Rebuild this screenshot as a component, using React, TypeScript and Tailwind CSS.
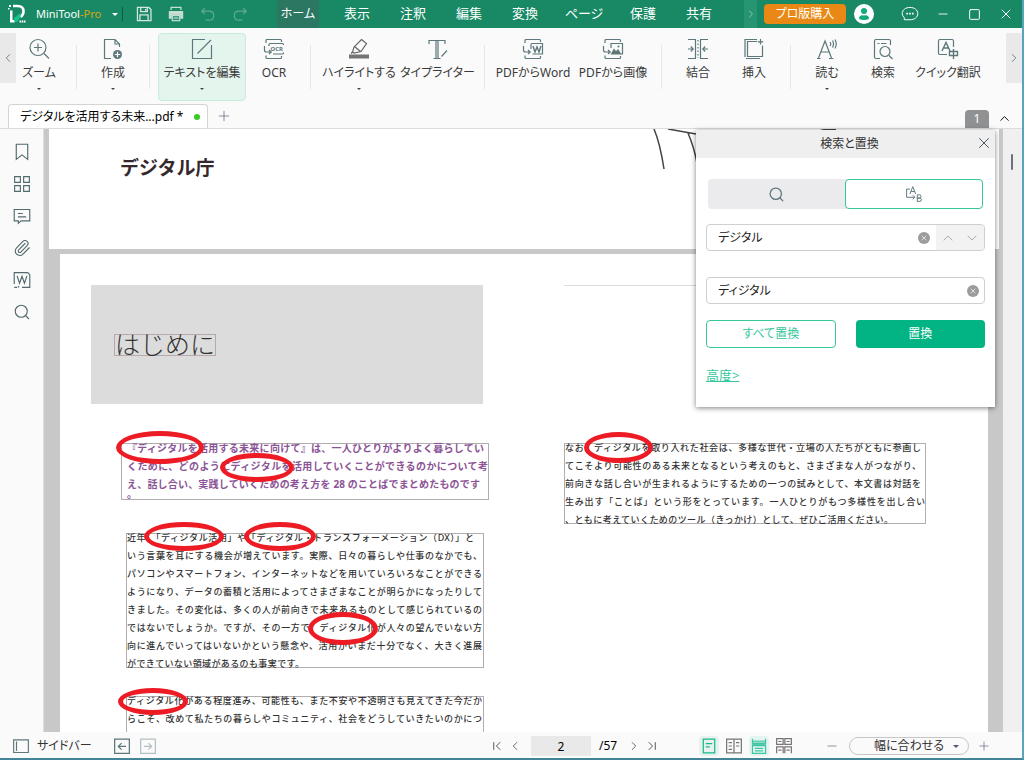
import type { ReactNode } from "react";
import { ChevronDown, ChevronLeft, ChevronRight, ChevronUp, Minus, Paperclip, Plus, Search, Square, X } from "lucide-react";
import clsx from "clsx";

type Tool = {
  label: string;
  icon: ReactNode;
  width: string;
  menu?: boolean;
  active?: boolean;
  divider?: boolean;
};

type Line = {
  text: string;
  className?: string;
};

const menuTabs = [
  { label: "表示", width: "w-14" },
  { label: "注釈", width: "w-14" },
  { label: "編集", width: "w-14" },
  { label: "変換", width: "w-14" },
  { label: "ページ", width: "w-[62px]" },
  { label: "保護", width: "w-14" },
  { label: "共有", width: "w-14" }
];

function Icon({ children, className = "h-[22px] w-[22px]" }: { children: ReactNode; className?: string }) {
  return (
    <svg viewBox="0 0 22 22" fill="none" stroke="currentColor" strokeWidth="1.2" className={clsx("shrink-0", className)} aria-hidden="true">
      {children}
    </svg>
  );
}

const convertFrame = <path d="M3 5V2.5Q3 1.5 4 1.5H17.5Q18.5 1.5 18.5 2.5V4M1.5 8V12Q1.5 14 3.5 14H8M6 12l2.2 2L6 16M3 17.5V19.5Q3 20.5 4 20.5H17.5Q18.5 20.5 18.5 19.5V18" />;

const tools: Tool[] = [
  {
    label: "ズーム",
    width: "w-[46px] mr-1.5",
    menu: true,
    divider: true,
    icon: (
      <Icon>
        <circle cx="10" cy="9.5" r="8" />
        <path d="M10 5.5v8M6 9.5h8M16 15.5l5 5" />
      </Icon>
    )
  },
  {
    label: "作成",
    width: "w-14",
    menu: true,
    divider: true,
    icon: (
      <Icon>
        <path d="M9 20.5H2.5V1.5H13L17.5 6V9M13 1.5V6H17.5" />
        <circle cx="15.5" cy="16.5" r="4.5" fill="currentColor" stroke="none" />
        <path d="M15.5 13.8v5.4M12.8 16.5h5.4" stroke="white" />
      </Icon>
    )
  },
  {
    label: "テキストを編集",
    width: "w-[88px]",
    menu: true,
    active: true,
    icon: (
      <Icon>
        <path d="M14 1.5H1.5V20.5H20.5V7M6.5 15.5L20 2" />
      </Icon>
    )
  },
  {
    label: "OCR",
    width: "w-14",
    divider: true,
    icon: (
      <Icon>
        {convertFrame}
        <path d="M6 8V6.5Q6 5.5 7 5.5H19.5Q20.5 5.5 20.5 6.5V7M10 16H19.5Q20.5 16 20.5 15V14.5" />
        <text x="7.5" y="13" fontSize="6" fontFamily="Noto Sans" fontWeight="700" fill="currentColor" stroke="none">OCR</text>
      </Icon>
    )
  },
  {
    label: "ハイライトする",
    width: "w-20",
    menu: true,
    icon: (
      <Icon>
        <path d="M13.5 1.5l5 4-5.5 8-7 1.5-1.5-1 1.5-5zM6.5 8.5l6 5M4.5 14l-1.5 1.5" stroke="#666" />
        <path d="M1 18.5h20" strokeWidth="4" stroke="#737373" />
      </Icon>
    )
  },
  {
    label: "タイプライター",
    width: "w-[77px]",
    divider: true,
    icon: (
      <Icon>
        <path d="M2 6V2.5H18V6M9 2.5V20.5M11 2.5V20.5M6.5 20.5H13.5M14.5 18.5L20 12.5" />
      </Icon>
    )
  },
  {
    label: "PDFからWord",
    width: "w-20",
    icon: (
      <Icon>
        {convertFrame}
        <path d="M9 11V6.5Q9 5.5 10 5.5H20.5V16H10.5" />
        <path d="M11 8l2 6 2-5 2 5 2-6" strokeWidth="1.4" />
      </Icon>
    )
  },
  {
    label: "PDFから画像",
    width: "w-20",
    divider: true,
    icon: (
      <Icon>
        {convertFrame}
        <path d="M9 10V5.5H20.5V16H19" />
        <path d="M9.5 16l2.5-4.5 2 2.5 2-2 2.5 4z" fill="currentColor" />
        <circle cx="16.5" cy="8.5" r="1" fill="currentColor" stroke="none" />
      </Icon>
    )
  },
  {
    label: "結合",
    width: "w-14",
    icon: (
      <Icon>
        <path d="M1 1.5H9M1 20.5H9M13 1.5H21M13 20.5H21M8.5 1.5V20.5M13.5 1.5V20.5M1 11H6M3.8 8.5L6.2 11 3.8 13.5M21 11H16M18.2 8.5L15.8 11 18.2 13.5" />
        <path d="M11 2V20" strokeDasharray="1.5 2" />
      </Icon>
    )
  },
  {
    label: "挿入",
    width: "w-14",
    divider: true,
    icon: (
      <Icon>
        <path d="M14 3.5H4.5V18.5H19.5V7.5M3 20.5H17M2 19V1.5H14M17.5 1V6.5M14.8 3.8H20.3" />
      </Icon>
    )
  },
  {
    label: "読む",
    width: "w-14",
    menu: true,
    icon: (
      <Icon>
        <path d="M2.5 20L9 3L15.5 20M4.8 14H13.2M1 20.5H4.5M13 20.5H17.5M14 4Q15.5 6 14 8M16.5 2.5Q18.5 6 16.5 9.5M19 1.5Q21.5 6 19 10.5" />
      </Icon>
    )
  },
  {
    label: "検索",
    width: "w-14",
    icon: (
      <Icon>
        <path d="M8 20.5H4Q2.5 20.5 2.5 19V3Q2.5 1.5 4 1.5H17Q18.5 1.5 18.5 3V7M5.5 5.5H7.5M9 5.5H14.5M17 17.5L20.5 21" />
        <circle cx="13" cy="13.5" r="5" />
      </Icon>
    )
  },
  {
    label: "クイック翻訳",
    width: "w-[74px]",
    icon: (
      <Icon>
        <path d="M10 16.5H3Q1.5 16.5 1.5 15V3Q1.5 1.5 3 1.5H15Q16.5 1.5 16.5 3V9" />
        <path d="M5 13L9 4.5L13 13M6.5 10H11.5M16.5 11V21M12.5 13.5H20.5V17.5H12.5z" strokeWidth="1.4" />
      </Icon>
    )
  }
];

const purpleText: Line[] = [
  { text: "『ディジタルを活用する未来に向けて』は、一人ひとりがよりよく暮らしてい", className: "pr-1" },
  { text: "くために、どのようにディジタルを活用していくことができるのかについて考" },
  { text: "え、話し合い、実践していくための考え方を 28 のことばでまとめたものです", className: "pr-2" },
  { text: "。", className: "-mt-2" }
];

const eraText: Line[] = [
  { text: "近年、「ディジタル活用」や「ディジタル・トランスフォーメーション（DX）」と", className: "pr-2" },
  { text: "いう言葉を耳にする機会が増えています。実際、日々の暮らしや仕事のなかでも、" },
  { text: "パソコンやスマートフォン、インターネットなどを用いていろいろなことができる" },
  { text: "ようになり、データの蓄積と活用によってさまざまなことが明らかになったりして" },
  { text: "きました。その変化は、多くの人が前向きで未来あるものとして感じられているの" },
  { text: "ではないでしょうか。ですが、その一方で、ディジタル化が人々の望んでいない方" },
  { text: "向に進んでいってはいないかという懸念や、活用がいまだ十分でなく、大きく進展" },
  { text: "ができていない領域があるのも事実です。", className: "w-[177px]" }
];

const progressText: Line[] = [
  { text: "ディジタル化がある程度進み、可能性も、また不安や不透明さも見えてきた今だか" },
  { text: "らこそ、改めて私たちの暮らしやコミュニティ、社会をどうしていきたいのかにつ" }
];

const societyText: Line[] = [
  { text: "なお、ディジタルを取り入れた社会は、多様な世代・立場の人たちがともに参画し", className: "pr-1" },
  { text: "てこそより可能性のある未来となるという考えのもと、さまざまな人がつながり、", className: "pr-1" },
  { text: "前向きな話し合いが生まれるようにするための一つの試みとして、本文書は対話を", className: "pr-1" },
  { text: "生み出す「ことば」という形をとっています。一人ひとりがもつ多様性を出し合い" },
  { text: "、ともに考えていくためのツール（きっかけ）として、ぜひご活用ください。", className: "pr-8" }
];

function Caret({ className }: { className?: string }) {
  return <span className={clsx("block h-0 w-0 border-x-transparent", className)} />;
}

function TitleBar() {
  return (
    <header className="flex h-7 shrink-0 items-center bg-[#188964] text-white">
      <svg viewBox="0 0 20 20" className="ml-2 h-5 w-5 shrink-0" aria-hidden="true">
        <path d="M1 1h2v2H1zM0 4h1.5v1.5H0zM2 18V6.5H4.5V16H8L6.500 18.500H2z" fill="white" />
        <path d="M5 2H9.500Q15.500 2 15.500 7.500Q15.500 11 12.500 13" fill="none" stroke="white" strokeWidth="2.600" />
        <path d="M6 16V14L12.500 9V13L9 18H6.500z" fill="#14c38e" />
        <path d="M11.500 17.500H18" stroke="white" strokeWidth="1.800" strokeDasharray="1.600 .6" />
      </svg>
      <span className="ml-2 w-[73px] text-[11px]">
        MiniTool<span className="text-[#d9a514]">-Pro</span>
      </span>
      <button aria-label="アプリメニュー" className="ml-0.5 flex h-5 w-2 items-center justify-center">
        <Caret className="border-x-[3px] border-t-[3px] border-t-white" />
      </button>
      <span className="ml-[3px] h-3.5 w-px bg-[#0d5a40]" />
      <button aria-label="保存" className="ml-3 text-[#d3e7df]">
        <Icon className="h-[18px] w-[18px]">
          <path d="M3 3H17L19.5 5.5V19H3zM7 3V8H15V3M6 19V12H16V19M13 5V7" strokeWidth="1.6" />
        </Icon>
      </button>
      <button aria-label="印刷" className="ml-3.5 text-[#c4ded4]">
        <Icon className="h-[18px] w-[18px]">
          <path d="M5 6V3H17V6" strokeWidth="1.6" />
          <path d="M3 8H19V16H17V12H5V16H3z" fill="currentColor" strokeWidth="1.6" />
          <path d="M6.5 13H15.5V19H6.5zM8 16H14" strokeWidth="1.6" />
        </Icon>
      </button>
      <button aria-label="元に戻す" className="ml-3.5 text-[#5dab92]">
        <Icon className="h-[18px] w-[18px]">
          <path d="M7 4L3.5 7.5L7 11M3.5 7.5H12Q18 7.5 18 13T12 18.5H8" strokeWidth="1.5" />
        </Icon>
      </button>
      <button aria-label="やり直し" className="ml-3.5 text-[#5dab92]">
        <Icon className="h-[18px] w-[18px]">
          <path d="M15 4L18.5 7.5L15 11M18.5 7.5H10Q4 7.5 4 13T10 18.5H14" strokeWidth="1.5" />
        </Icon>
      </button>
      <nav className="ml-7 flex h-full flex-1 items-center text-[13px]">
        <button className="mr-2.5 h-full w-[42px] whitespace-nowrap bg-[#2b7762] text-[12px]">ホーム</button>
        {menuTabs.map((tab) => (
          <button key={tab.label} className={clsx("h-full whitespace-nowrap", tab.width)}>
            {tab.label}
          </button>
        ))}
      </nav>
      <button aria-label="次のタブ" className="flex h-full w-[13px] items-center justify-center bg-[#279571] text-[#8cc8b2]">
        <ChevronRight size={12} />
      </button>
      <button className="ml-[7px] h-5 w-[82px] whitespace-nowrap rounded bg-[#e98814] text-[12px]">プロ版購入</button>
      <button aria-label="アカウント" className="ml-2 flex h-5 w-5 items-center justify-center rounded-full bg-white">
        <svg viewBox="0 0 14 14" className="h-3.5 w-3.5" fill="#13a97c" aria-hidden="true">
          <circle cx="7" cy="4" r="3" />
          <path d="M2 12Q2 7.5 7 8.5Q12 7.5 12 12Q7 14 2 12z" />
        </svg>
      </button>
      <button aria-label="フィードバック" className="ml-[27px]">
        <Icon className="h-[18px] w-[18px]">
          <path d="M4 18V15.5Q1.5 13 1.5 10.5C1.5 6 5.5 3 11 3S20.5 6 20.5 10.5S16.5 18 11 18z" />
          <path d="M6.5 10.5h2M10 10.5h2M13.5 10.5h2" strokeWidth="2" />
        </Icon>
      </button>
      <button aria-label="最小化" className="ml-[17px]"><Minus size={14} strokeWidth={1.5} /></button>
      <button aria-label="最大化" className="ml-[18px]"><Square size={13} strokeWidth={1.8} /></button>
      <button aria-label="閉じる" className="ml-[17px] mr-2"><X size={16} strokeWidth={1.5} /></button>
    </header>
  );
}

function Ribbon() {
  return (
    <div className="flex h-[76px] shrink-0 pt-[5px]">
      <button aria-label="左へスクロール" className="flex h-[50px] w-4 items-center justify-center bg-[#e9e9e9] text-gray-500">
        <ChevronLeft size={14} strokeWidth={1.5} />
      </button>
      {tools.map((tool) => (
        <div key={tool.label} className="flex shrink-0">
          <button
            className={clsx(
              "flex h-[68px] flex-col items-center rounded-sm border pt-1",
              tool.width,
              tool.active ? "border-[#c5ecdd] bg-[#e4f5ee]" : "border-transparent"
            )}
          >
            <span className="text-[#5d777b]">{tool.icon}</span>
            <span className="mt-[3px] whitespace-nowrap text-[12px] leading-5 text-[#3a3a3a]">{tool.label}</span>
            {tool.menu ? <Caret className="mt-[5px] border-x-2 border-t-2 border-t-[#444]" /> : null}
          </button>
          {tool.divider ? <span className="mx-2 mt-3 h-11 w-px bg-[#e6e6e6]" /> : null}
        </div>
      ))}
      <button aria-label="右へスクロール" className="ml-auto flex h-[50px] w-4 items-center justify-center bg-[#e9e9e9] text-gray-500">
        <ChevronRight size={14} strokeWidth={1.5} />
      </button>
    </div>
  );
}

function DocumentTabs() {
  return (
    <div className="flex h-[25px] shrink-0 items-end border-b border-[#dcdcdc]">
      <button className="ml-2 flex h-6 w-[200px] items-center justify-between rounded-t border border-b-0 border-[#d4d4d4] bg-white pl-[11px] pr-[7px] text-[12px] text-black">
        <span className="whitespace-nowrap">デジタルを活用する未来...pdf *</span>
        <span className="h-1.5 w-1.5 rounded-full bg-[#35cb24]" />
      </button>
      <button aria-label="新しいタブ" className="mb-1 ml-2 text-gray-500"><Plus size={16} strokeWidth={1.2} /></button>
      <span className="ml-auto flex h-[18px] w-6 items-center justify-center rounded-t-sm bg-[#8f9193] text-[12px] text-white">1</span>
      <button aria-label="リボンを閉じる" className="mb-0.5 ml-2 mr-2.5"><ChevronUp size={15} strokeWidth={1.5} /></button>
    </div>
  );
}

function Sidebar() {
  return (
    <aside className="flex w-[43px] shrink-0 flex-col items-center gap-3.5 bg-[#fafafa] pt-3.5 text-[#52696d]">
      <button aria-label="しおり">
        <Icon className="h-[18px] w-[18px]"><path d="M4 1.5H18V20L11 14.5L4 20z" strokeWidth="1.4" /></Icon>
      </button>
      <button aria-label="サムネイル">
        <Icon className="h-[18px] w-[18px]"><path d="M2 2H9V9H2zM13 2H20V9H13zM2 13H9V20H2zM13 13H20V20H13z" strokeWidth="1.4" /></Icon>
      </button>
      <button aria-label="注釈">
        <Icon className="h-[18px] w-[18px]"><path d="M1.5 3H20.5V17H10L6.5 20V17H1.5zM6 8H12M6 12H16" strokeWidth="1.4" /></Icon>
      </button>
      <button aria-label="添付ファイル"><Paperclip size={18} strokeWidth={1.5} /></button>
      <button aria-label="Word">
        <Icon className="h-[18px] w-[18px]">
          <path d="M1.5 16V2H18L20.5 4.5V20H11M1.5 20H5M6 20L7.5 18.5M5 6L8 15L11 6.5L14 15L17 6" strokeWidth="1.4" />
        </Icon>
      </button>
      <button aria-label="検索"><Search size={18} strokeWidth={1.5} /></button>
    </aside>
  );
}

function TextBox({ lines, className, children }: { lines: Line[]; className: string; children?: ReactNode }) {
  return (
    <div className="relative">
      <div className={clsx("border border-[#b3adb0]", className)}>
        <div className="-mt-[5px]">
          {lines.map((line) => (
            <p key={line.text} className={clsx("whitespace-nowrap leading-[18px] [text-align-last:justify]", line.className)}>
              {line.text}
            </p>
          ))}
        </div>
      </div>
      {children}
    </div>
  );
}

// Red pen ring drawn over the text
function Ring({ className }: { className: string }) {
  return <span className={clsx("pointer-events-none absolute rounded-[50%] border-[5px] border-[#ed1c24]", className)} />;
}

function Pages() {
  return (
    <main className="min-w-0 flex-1 overflow-hidden border-l border-[#dedede] bg-[#c8c8c8] text-[#333]">
      <section className="ml-[5px] mr-1 flex h-[120px] bg-white">
        <h1 className="ml-[71px] mt-6 w-[530px] shrink-0 text-[19px] font-bold leading-[30px] text-[#35292c]">デジタル庁</h1>
        <svg viewBox="0 0 190 42" className="h-[42px] w-[190px] shrink-0" fill="none" stroke="#444" aria-hidden="true">
          <path d="M4 0Q10 14 14 40" strokeWidth="1.5" />
          <path d="M18 0L46 5M38 4Q44 18 47 34" strokeWidth="1.5" />
          <path d="M170 2Q176 0 180 1L186 0" strokeWidth="2" />
        </svg>
      </section>
      <section className="ml-4 mr-[15px] mt-[5px] flex min-h-[500px] bg-white pl-[31px] pt-[31px]">
        <div className="w-[398px] shrink-0">
          <div className="flex h-[119px] w-[392px] items-center bg-[#dcdcdc] pl-[23px]">
            <h2 className="flex h-[22px] items-center whitespace-nowrap border border-[#b5a9ac] text-[25px] font-light">はじめに</h2>
          </div>
          <div className="ml-[30px] mt-[39px] font-bold text-[#8b5496]">
            <TextBox lines={purpleText} className="h-[57px] pl-[5px] text-[10px]">
              <Ring className="-left-[5px] -top-3 h-[33px] w-[88px]" />
              <Ring className="left-[99px] top-2.5 h-[29px] w-[74px]" />
            </TextBox>
          </div>
          <div className="ml-[35px] mr-[5px] mt-[33px] font-medium">
            <TextBox lines={eraText} className="h-[135px] pr-px text-[9px]">
              <Ring className="left-[18px] -top-[11px] h-[29px] w-20" />
              <Ring className="left-[118px] -top-[11px] h-[29px] w-[72px]" />
              <Ring className="left-[182px] top-[79px] h-[33px] w-[70px]" />
            </TextBox>
          </div>
          <div className="ml-[35px] mr-[5px] mt-7 font-medium">
            <TextBox lines={progressText} className="h-[60px] pr-px text-[9px]">
              <Ring className="-left-2 -top-2 h-[27px] w-[70px]" />
            </TextBox>
          </div>
        </div>
        <div className="ml-[75px] flex-1 border-t border-[#dcdcdc]">
          <div className="mt-[157px] w-[362px] font-medium">
            <TextBox lines={societyText} className="h-[81px] text-[9px]">
              <Ring className="left-5 -top-[11px] h-[31px] w-[69px]" />
            </TextBox>
          </div>
        </div>
      </section>
    </main>
  );
}

function ClearButton() {
  return (
    <button aria-label="クリア" className="flex h-3 w-3 shrink-0 items-center justify-center rounded-full bg-[#9c9c9c] text-white">
      <X size={8} />
    </button>
  );
}

function FindReplacePanel() {
  return (
    <div role="dialog" aria-label="検索と置換" className="absolute right-[27px] top-px h-[277px] w-[299px] bg-white text-[13px] shadow-[0_1px_5px_rgba(0,0,0,0.5)]">
      <div className="relative flex h-7 items-center justify-center bg-[#efefef] pl-2 text-[12px] text-[#333]">
        検索と置換
        <button aria-label="パネルを閉じる" className="absolute right-0.5 top-1 text-gray-600"><X size={18} strokeWidth={1.3} /></button>
      </div>
      <div className="px-2.5">
        <div className="mx-0.5 mt-[21px] flex h-[30px] rounded bg-[#ebebed] text-[#5d777b]">
          <button aria-label="検索" className="flex flex-1 items-center justify-center"><Search size={17} strokeWidth={1.8} /></button>
          <button aria-label="置換モード" className="flex flex-1 items-center justify-center rounded border border-[#36c79c] bg-white">
            <Icon className="h-[18px] w-[18px]">
              <path d="M6 5H2V15H12M9.5 12.5L12 15L9.5 17.5M6 11L9.5 2L13 11M7.5 8H11.5M15 12V20H18Q20 20 20 18T18 16H15H18Q19.5 16 19.5 14T18 12z" />
            </Icon>
          </button>
        </div>
        <div className="mt-[15px] flex h-[27px] items-center overflow-hidden rounded border border-[#cfcfcf]">
          <input aria-label="検索する文字列" defaultValue="デジタル" className="min-w-0 flex-1 pl-[11px] text-[12px] text-[#222] outline-none" />
          <ClearButton />
          <div className="ml-1.5 flex h-full w-12 items-center justify-around bg-[#f2f2f2] text-[#ababab]">
            <button aria-label="前へ"><ChevronUp size={16} strokeWidth={1.5} /></button>
            <button aria-label="次へ"><ChevronDown size={16} strokeWidth={1.5} /></button>
          </div>
        </div>
        <div className="mt-[26px] flex h-[27px] items-center rounded border border-[#cfcfcf] pr-[5px]">
          <input aria-label="置換後の文字列" defaultValue="ディジタル" className="min-w-0 flex-1 pl-[11px] text-[12px] text-[#222] outline-none" />
          <ClearButton />
        </div>
        <div className="mt-4 grid h-7 grid-cols-2 gap-5 text-[12px]">
          <button className="rounded border border-[#36c79c] text-[#36c79c]">すべて置換</button>
          <button className="rounded bg-[#02b383] text-white">置換</button>
        </div>
        <a href="#advanced" className="mt-[17px] inline-block text-[13px] leading-5 text-[#36c79c] underline">高度&gt;</a>
      </div>
    </div>
  );
}

function StatusBar() {
  return (
    <footer className="flex h-[26px] shrink-0 items-center bg-[#fafafa] pt-0.5 text-[12px] text-[#333]">
      <button className="ml-3 flex items-center gap-[7px] whitespace-nowrap">
        <Icon className="h-[18px] w-[18px]"><path d="M2 3.5H20V19H2zM5.5 5.5V17" stroke="#5d777b" strokeWidth="1.4" /></Icon>
        サイドバー
      </button>
      <button aria-label="前の表示" className="ml-[21px] text-[#5d777b]">
        <Icon className="h-[18px] w-[18px]"><path d="M2 2.5H20V20H2zM16 11.5H7M10.5 7.5L6.5 11.5L10.5 15.5" strokeWidth="1.5" /></Icon>
      </button>
      <button aria-label="次の表示" className="ml-2 text-[#b2c0c1]">
        <Icon className="h-[18px] w-[18px]"><path d="M2 2.5H20V20H2zM6 11.5H15M11.5 7.5L15.5 11.5L11.5 15.5" strokeWidth="1.5" /></Icon>
      </button>
      <div className="ml-auto flex items-center text-[#555]">
        <button aria-label="最初のページ"><Icon className="h-3 w-3"><path d="M5 4V18M17 4L10 11L17 18" strokeWidth="1.8" /></Icon></button>
        <button aria-label="前のページ" className="ml-[5px]"><ChevronLeft size={14} strokeWidth={1.5} /></button>
        <input aria-label="ページ番号" defaultValue="2" className="ml-[9px] h-5 w-[60px] bg-[#e9e9e9] text-center text-black outline-none" />
        <span className="ml-2 w-6 text-black">/57</span>
        <button aria-label="次のページ" className="ml-1"><ChevronRight size={14} strokeWidth={1.5} /></button>
        <button aria-label="最後のページ" className="ml-[5px] mr-px"><Icon className="h-3 w-3"><path d="M17 4V18M5 4L12 11L5 18" strokeWidth="1.8" /></Icon></button>
      </div>
      <div className="ml-10 flex items-center gap-[5px] text-[#777]">
        <button aria-label="単一ページ" className="flex h-5 w-5 items-center justify-center rounded bg-[#e9f1ee] text-[#14b88a]">
          <Icon className="h-[18px] w-[18px]"><path d="M4 2.5H18V19.5H4zM7 8H15M7 12H12" strokeWidth="1.5" /></Icon>
        </button>
        <button aria-label="見開き" className="flex h-5 w-5 items-center justify-center">
          <Icon className="h-[18px] w-[18px]"><path d="M2 2.5H20V19.5H2zM11 2.5V19.5M4.5 7H8.5M4.5 11H8.5M13.5 7H17.5M13.5 11H17.5M4.5 15H8.5" strokeWidth="1.5" /></Icon>
        </button>
        <button aria-label="連続ページ" className="flex h-5 w-5 items-center justify-center rounded bg-[#e4f5ef] text-[#3fc5a3]">
          <Icon className="h-[18px] w-[18px]">
            <path d="M3 2V8H19V2M3 20V10.5H19V20z" strokeWidth="1.5" />
            <path d="M3 5H19V9H3z" fill="currentColor" fillOpacity=".5" />
            <path d="M6 14H16M6 17H16" strokeWidth="1.5" />
          </Icon>
        </button>
        <button aria-label="連続見開き" className="flex h-5 w-5 items-center justify-center">
          <Icon className="h-[18px] w-[18px]"><path d="M2 2V9H10V2zM12 2V9H20V2zM2 20V12H10V20M12 20V12H20V20M4 5.5H8M14 5.5H18M4 16H8M14 16H18" strokeWidth="1.5" /></Icon>
        </button>
      </div>
      <button aria-label="縮小" className="ml-[31px] text-gray-500"><Minus size={14} strokeWidth={1.3} /></button>
      <div className="relative ml-2.5 flex items-center">
        <select aria-label="表示倍率" className="h-[18px] w-[120px] appearance-none rounded-full border border-[#c6c6c6] bg-[#fafafa] pl-6 text-[12px] leading-4">
          <option>幅に合わせる</option>
        </select>
        <Caret className="pointer-events-none absolute right-2.5 border-x-[3px] border-t-[3px] border-t-[#557]" />
      </div>
      <button aria-label="拡大" className="ml-2 mr-[31px] text-gray-500"><Plus size={14} strokeWidth={1.3} /></button>
    </footer>
  );
}

export default function App() {
  return (
    <div
      lang="ja"
      className="flex h-screen flex-col overflow-hidden border-b-2 border-r-2 border-b-[#438496] border-r-[#5aa4bb] bg-[#fafafa] font-['Noto_Sans','Noto_Sans_CJK_JP',sans-serif] [font-feature-settings:'palt']"
    >
      <TitleBar />
      <Ribbon />
      <DocumentTabs />
      <div className="relative flex min-h-0 flex-1">
        <Sidebar />
        <div className="flex min-w-0 flex-1 [font-feature-settings:normal]">
          <Pages />
        </div>
        <div className="w-[19px] shrink-0 bg-[#f0f0f0] pl-2 pt-[25px]">
          <div className="h-4 w-0.5 rounded bg-gray-500" />
        </div>
        <FindReplacePanel />
      </div>
      <StatusBar />
    </div>
  );
}
